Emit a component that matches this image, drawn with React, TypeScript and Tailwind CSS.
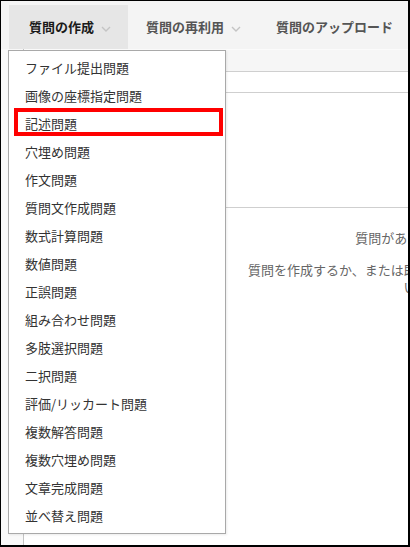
const tabs = [
  { label: '質問の作成', active: true, chevron: true, cls: 'w-[119px] pl-[20px]' },
  { label: '質問の再利用', active: false, chevron: true, cls: 'w-[130px] pl-[18px]' },
  { label: '質問のアップロード', active: false, chevron: false, cls: 'pl-[18px]' }
];

const questionTypes = [
  'ファイル提出問題',
  '画像の座標指定問題',
  '記述問題',
  '穴埋め問題',
  '作文問題',
  '質問文作成問題',
  '数式計算問題',
  '数値問題',
  '正誤問題',
  '組み合わせ問題',
  '多肢選択問題',
  '二択問題',
  '評価/リッカート問題',
  '複数解答問題',
  '複数穴埋め問題',
  '文章完成問題',
  '並べ替え問題'
];

function Chevron() {
  return (
    <svg width="10" height="6" viewBox="0 0 10 6" className="mt-[3px] shrink-0">
      <polyline points="1,1 5,5 9,1" fill="none" stroke="#c4c4c4" strokeWidth="1.4" />
    </svg>
  );
}

export default function App() {
  return (
    <div
      className="relative h-[547px] w-[410px] overflow-hidden border-b-2 border-l border-r-2 border-t border-black bg-white"
      style={{ fontFamily: '"Noto Sans CJK JP", "Noto Sans", sans-serif' }}
    >
      <nav className="flex h-[48px] bg-[#f4f4f4] pl-[8px] pt-[4px]">
        {tabs.map((tab) => (
          <div
            key={tab.label}
            className={`flex h-[44px] shrink-0 items-center gap-[7px] text-[13px] font-bold ${tab.cls} ${
              tab.active ? 'bg-[#e6e6e6] text-[#1a1a1a]' : 'text-[#555]'
            }`}
          >
            <span className="whitespace-nowrap">{tab.label}</span>
            {tab.chevron && <Chevron />}
          </div>
        ))}
      </nav>

      <div className="flex h-[497px]">
        <div className="w-[22px] shrink-0 bg-[#f9f9f9]" />
        <div className="w-[786px] shrink-0 border-l border-[#c4c4c4]">
          <div className="h-[23px] border-b border-t border-b-[#cfcfcf] border-t-[#fbfbfb] bg-[#f6f6f6]" />
          <div className="h-[21px] border-b border-[#cfcfcf]" />
          <div className="h-[115px] border-b border-[#cfcfcf]" />
          <div className="whitespace-nowrap pt-[21px] text-center text-[13px] leading-[17px] text-[#666]">
            <p className="pr-[6px]">質問がありません。</p>
            <p className="mt-[15px]">
              質問を作成するか、または既存の質問を再利用してくださ
              <br />
              い。
            </p>
          </div>
        </div>
      </div>

      <ul className="absolute left-[7px] top-[49px] w-[218px] border border-[#a9a9a9] bg-white py-[3px] shadow-[1px_1px_2px_rgba(0,0,0,0.08)]">
        {questionTypes.map((item) => (
          <li key={item} className="flex h-[28px] items-center pl-[16px] text-[13px] text-[#333]">
            {item}
          </li>
        ))}
      </ul>

      <div className="absolute left-[13px] top-[107px] h-[28px] w-[209px] border-[4px] border-[#ff0000]" />
    </div>
  );
}
